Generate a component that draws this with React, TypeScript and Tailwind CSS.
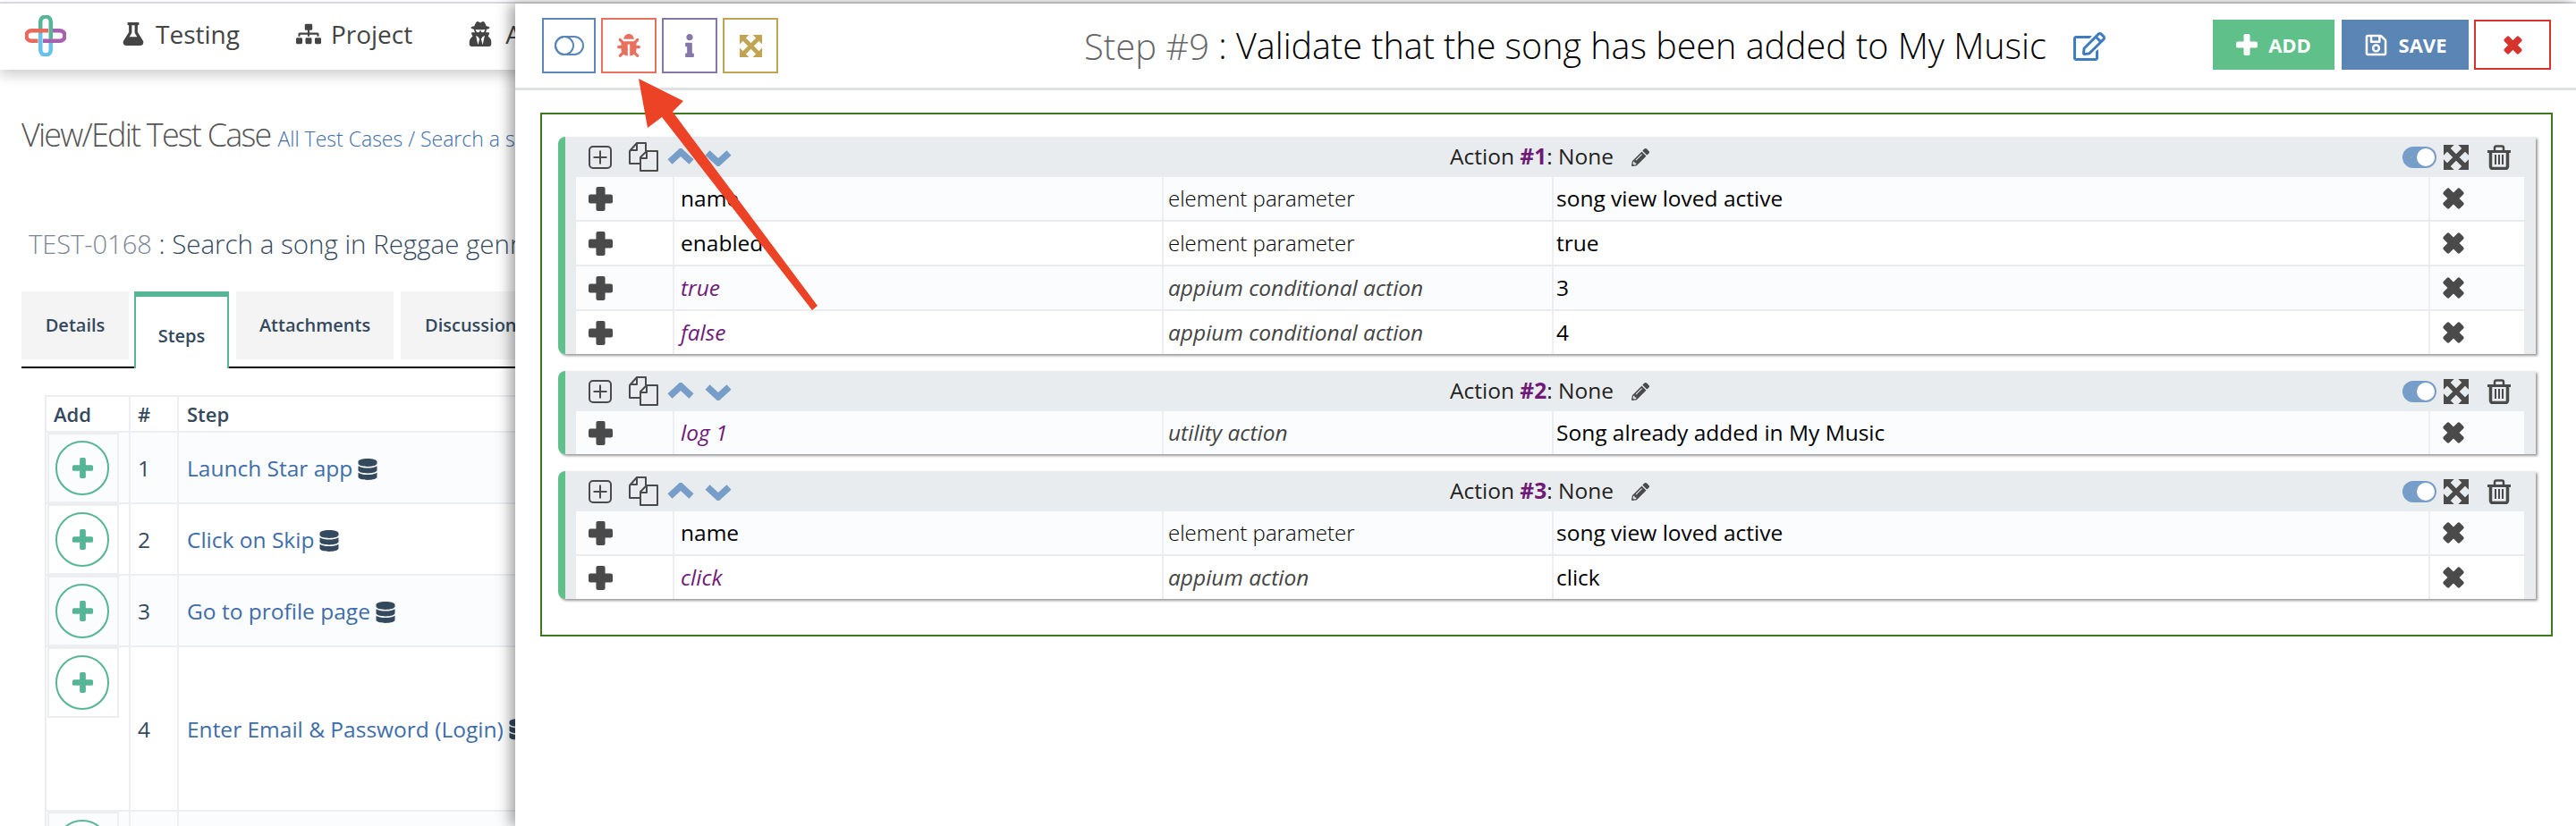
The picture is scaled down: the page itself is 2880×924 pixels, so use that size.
import React from "react";
import {
  FaBug,
  FaDatabase,
  FaFlask,
  FaInfo,
  FaPencilAlt,
  FaRegEdit,
  FaRegSave,
  FaSitemap,
  FaUserSecret,
} from "react-icons/fa";

interface ParamRow {
  name: string;
  kind: string;
  value: string;
  action?: boolean;
}

const cards: { id: number; rows: ParamRow[] }[] = [
  {
    id: 1,
    rows: [
      { name: "name", kind: "element parameter", value: "song view loved active" },
      { name: "enabled", kind: "element parameter", value: "true" },
      { name: "true", kind: "appium conditional action", value: "3", action: true },
      { name: "false", kind: "appium conditional action", value: "4", action: true },
    ],
  },
  {
    id: 2,
    rows: [{ name: "log 1", kind: "utility action", value: "Song already added in My Music", action: true }],
  },
  {
    id: 3,
    rows: [
      { name: "name", kind: "element parameter", value: "song view loved active" },
      { name: "click", kind: "appium action", value: "click", action: true },
    ],
  },
];

const steps = [
  { n: 1, label: "Launch Star app" },
  { n: 2, label: "Click on Skip" },
  { n: 3, label: "Go to profile page" },
];

const Logo = () => (
  <svg width="46" height="46" viewBox="0 0 46 46" fill="none" strokeWidth="4.5">
    <path d="M17.25 20V7.25a5.75 5.75 0 0 1 11.5 0V26" stroke="#55b596" />
    <path d="M17.25 20V38.75a5.75 5.75 0 0 0 11.5 0V26" stroke="#63c2ee" />
    <path d="M26 17.25H7.25a5.75 5.75 0 0 0 0 11.5H14.5" stroke="#e8695d" />
    <path d="M20 28.75H38.75a5.75 5.75 0 0 0 0-11.5H31" stroke="#a85fb0" />
  </svg>
);

// chunky plus / cross, the icon font's plus and times are heavier than the packaged ones
const Cross = ({ size, arm, color, turned }: { size: number; arm: number; color: string; turned?: boolean }) => (
  <svg width={size} height={size} viewBox="0 0 24 24" fill={color}>
    <g transform={turned ? "rotate(45 12 12)" : undefined}>
      <rect x="0" y={12 - arm / 2} width="24" height={arm} rx="1.8" />
      <rect x={12 - arm / 2} y="0" width={arm} height="24" rx="1.8" />
    </g>
  </svg>
);

const Chevron = ({ down }: { down?: boolean }) => (
  <svg width="30" height="20" viewBox="0 0 30 20" fill="none" stroke="#779dc9" strokeWidth="7.5">
    <path d={down ? "M3 5l12 11L27 5" : "M3 15L15 4l12 11"} />
  </svg>
);

const ExpandGlyph = ({ size, color }: { size: number; color: string }) => (
  <svg width={size} height={size} viewBox="0 0 24 24">
    <path d="M0 0h10L0 10zM24 0v10L14 0zM0 24V14l10 10zM24 24H14l10-10z" fill={color} />
    <path d="M4 4l16 16M20 4L4 20" stroke={color} strokeWidth="4.5" />
  </svg>
);

const TrashGlyph = () => (
  <svg width="26" height="28" viewBox="0 0 26 28" fill="none" stroke="#4a4a4a">
    <path d="M0 7.5h26" strokeWidth="3" />
    <path d="M8 7V3.5a2 2 0 0 1 2-2h6a2 2 0 0 1 2 2V7" strokeWidth="2.5" />
    <path d="M3.5 7v17.5a2.5 2.5 0 0 0 2.5 2h14a2.5 2.5 0 0 0 2.5-2V7" strokeWidth="3.5" />
    <path d="M9 11v11M13 11v11M17 11v11" strokeWidth="2" />
  </svg>
);

const ToggleGlyph = () => (
  <svg width="33" height="22" viewBox="0 0 33 22" fill="none" stroke="#5b87b8" strokeWidth="2">
    <rect x="1" y="1" width="31" height="20" rx="10" />
    <circle cx="11" cy="11" r="10" />
  </svg>
);

const PlusSquare = () => (
  <svg width="26" height="26" viewBox="0 0 26 26" fill="none" stroke="#4a4a4a" strokeWidth="2">
    <rect x="1" y="1" width="24" height="24" rx="4" />
    <path d="M13 5.5v15M5.5 13h15" />
  </svg>
);

const CopyGlyph = () => (
  <svg width="33" height="33" viewBox="0 0 33 33" fill="none" stroke="#4a4a4a" strokeWidth="2" strokeLinejoin="round">
    <path d="M12 24H1V10l8-9h10v9" />
    <path d="M9 1v8H1" />
    <path d="M13 32V17l7-7h12v22z" />
    <path d="M20 10v8h-7" />
  </svg>
);

const ActionCard = ({ id, rows }: { id: number; rows: ParamRow[] }) => (
  <div className="rounded-l-[8px] border-l-[8px] border-[#5fc08a] bg-[#e9ecee] pr-[13px] pl-[12px] shadow-[2px_2px_3px_rgba(0,0,0,0.4)]">
    <div className="flex h-[45px] items-center pl-[14px] pr-[15px]">
      <div className="flex flex-1 items-center">
        <PlusSquare />
        <span className="ml-[19px]">
          <CopyGlyph />
        </span>
        <span className="ml-[10px]">
          <Chevron />
        </span>
        <span className="ml-[12px]">
          <Chevron down />
        </span>
      </div>
      <div className="flex items-center text-[24.5px] text-[#222]">
        <span>
          Action <b className="text-[#6f1a78]">#{id}</b>: None
        </span>
        <FaPencilAlt className="ml-[20px] text-[20px] text-[#4a4a4a]" />
      </div>
      <div className="flex flex-1 items-center justify-end">
        <div className="flex h-[24px] w-[38px] justify-end rounded-full bg-[#779dc9] p-[2px]">
          <span className="h-[20px] w-[20px] rounded-full bg-white" />
        </div>
        <span className="ml-[8px]">
          <ExpandGlyph size={28} color="#4a4a4a" />
        </span>
        <span className="ml-[21px]">
          <TrashGlyph />
        </span>
      </div>
    </div>
    <div>
      {rows.map((row, i) => (
        <div
          key={row.name + i}
          className={`grid h-[48px] grid-cols-[110px_547px_436px_980px_105px] items-stretch text-[24.5px] ${
            i % 2 === 0 ? "bg-[#fbfcfe]" : "bg-white"
          } ${i > 0 ? "mt-[2px]" : ""}`}
        >
          <div className="flex items-center border-r-2 border-[#eceef2] pl-[14px]">
            <Cross size={27} arm={9} color="#4a4a4a" />
          </div>
          <div
            className={`flex items-center border-r-2 border-[#eceef2] pl-[7px] ${
              row.action ? "text-[#6f1a78] italic" : "text-black"
            }`}
          >
            {row.name}
          </div>
          <div
            className={`flex items-center border-r-2 border-[#eceef2] pl-[5px] ${
              row.action ? "text-[#444] italic" : "text-[24px] font-light text-black"
            }`}
          >
            {row.kind}
          </div>
          <div className="flex items-center border-r-2 border-[#eceef2] pl-[3px] text-black">{row.value}</div>
          <div className="flex items-center pl-[13px]">
            <Cross size={26} arm={8.5} color="#4a4a4a" turned />
          </div>
        </div>
      ))}
    </div>
  </div>
);

const AddCell = () => (
  <div className="h-[79px] w-[80px] border-2 border-[#eceef2] pt-[7px] pl-[7px]">
    <div className="flex h-[61px] w-[60px] items-center justify-center rounded-full border-2 border-[#55b596]">
      <Cross size={23} arm={7} color="#55b596" />
    </div>
  </div>
);

const StepRow = ({ n, label, tall, odd }: { n?: number; label?: string; tall?: boolean; odd?: boolean }) => (
  <div
    className={`grid grid-cols-[96px_54px_1fr] border-b-2 border-[#eceef2] ${tall ? "h-[184px]" : "h-[80px]"} ${
      odd ? "bg-[#fbfcfe]" : "bg-white"
    }`}
  >
    <div className="border-x-2 border-[#eceef2] pl-[1px]">
      <AddCell />
    </div>
    <div className="flex items-center border-r-2 border-[#eceef2] pt-[2px] pl-[8px] text-[24.5px] text-[#34495e]">{n}</div>
    {label && (
      <div className="flex items-center pt-[2px] pl-[9px] text-[24.5px] text-[#3e6daa]">
        {label}
        <FaDatabase className="ml-[5px] text-[24px] text-[#34495e]" />
      </div>
    )}
  </div>
);

export default function App() {
  return (
    <div className="relative h-[924px] w-[2880px] overflow-hidden bg-white pt-[2px] font-['Open_Sans',sans-serif]">
      <div className="h-[2px] bg-[#dfdee6]" />

      {/* Top nav */}
      <div className="flex h-[74px] items-center pb-[6px] pl-[28px] text-[28px] text-[#444] shadow-[0_6px_14px_rgba(0,0,0,0.2)]">
        <span className="mt-[4px]">
          <Logo />
        </span>
        <FaFlask className="ml-[62px] text-[26px]" />
        <span className="ml-[12px]">Testing</span>
        <FaSitemap className="ml-[63px] text-[28px]" />
        <span className="ml-[11px]">Project</span>
        <FaUserSecret className="ml-[62px] text-[28px]" />
        <span className="ml-[14px]">Admin</span>
      </div>

      {/* Page content under the panel */}
      <div className="pl-[24px]">
        <div className="mt-[46px] flex items-baseline">
          <span className="text-[36px] font-light tracking-[-1.8px] text-[#555]">View/Edit Test Case</span>
          <span className="ml-[8px] text-[23px] font-light text-[#3e6daa]">All Test Cases / Search a song in Reggae genre</span>
        </div>
        <div className="mt-[72px] pl-[8px] text-[29.5px] leading-[45px] font-light whitespace-nowrap text-[#34495e]">
          <span className="text-[29px] text-[#7a8794]">TEST-0168</span> : Search a song in Reggae genre
        </div>
        <div className="mt-[31px] flex h-[86px] w-[1200px] border-b-2 border-black text-[20px] font-semibold text-[#34495e]">
          <div className="flex h-[76px] w-[120px] items-center justify-center bg-[#f4f4f4]">Details</div>
          <div className="relative ml-[6px] flex h-[86px] w-[106px] items-center justify-center border-x-2 border-t-[6px] border-[#55b596] bg-white pt-[8px]">
            Steps
          </div>
          <div className="ml-[8px] flex h-[76px] w-[176px] items-center justify-center bg-[#f4f4f4]">Attachments</div>
          <div className="ml-[8px] flex h-[76px] w-[176px] items-center bg-[#f4f4f4] pl-[27px]">Discussion</div>
        </div>

        <div className="mt-[30px] ml-[26px] w-[1400px]">
          <div className="grid h-[42px] grid-cols-[96px_54px_1fr] border-y-2 border-[#eceef2] text-[22px] font-semibold text-[#34495e]">
            <div className="flex items-center border-x-2 border-[#eceef2] pl-[8px]">Add</div>
            <div className="flex items-center border-r-2 border-[#eceef2] pl-[8px]">#</div>
            <div className="flex items-center pl-[9px]">Step</div>
          </div>
          {steps.map((s) => (
            <StepRow key={s.n} n={s.n} label={s.label} odd={s.n % 2 === 1} />
          ))}
          <StepRow n={4} label="Enter Email & Password (Login)" tall />
          <StepRow odd />
        </div>
      </div>

      {/* Slide-over panel */}
      <div className="absolute top-[4px] right-0 bottom-0 left-[576px] bg-white shadow-[-6px_0_14px_rgba(0,0,0,0.35)]">
        <div className="flex h-[97px] items-start border-b-[3px] border-[#dfe0e3] pr-[28px] pl-[30px]">
          <div className="mt-[16px] flex gap-[6px]">
            <div className="flex h-[62px] w-[60px] items-center justify-center border-2 border-[#5b87b8]">
              <ToggleGlyph />
            </div>
            <div className="flex h-[62px] w-[62px] items-center justify-center border-2 border-[#e8705f] text-[26px] text-[#e8705f]">
              <FaBug />
            </div>
            <div className="flex h-[62px] w-[62px] items-center justify-center border-2 border-[#8676aa] text-[26px] text-[#8676aa]">
              <FaInfo />
            </div>
            <div className="flex h-[62px] w-[62px] items-center justify-center border-2 border-[#c2a352]">
              <ExpandGlyph size={25} color="#c2a352" />
            </div>
          </div>
          <div className="ml-[342px] flex h-[96px] items-center text-[39.5px] font-light whitespace-nowrap text-black">
            <span className="text-[40px] text-[#666]">Step #9</span>&nbsp;: Validate that the song has been added to My Music
            <FaRegEdit className="ml-[30px] text-[36px] text-[#3e7cc0]" />
          </div>
          <div className="mt-[18px] ml-auto flex text-[22px] font-bold text-white">
            <div className="flex h-[56px] w-[136px] items-center justify-center bg-[#5fc08a]">
              <span className="mr-[12px]">
                <Cross size={24} arm={7} color="#ffffff" />
              </span>
              ADD
            </div>
            <div className="ml-[8px] flex h-[56px] w-[142px] items-center justify-center bg-[#5b85b5]">
              <FaRegSave className="mr-[12px] text-[27px]" />
              SAVE
            </div>
            <div className="ml-[6px] flex h-[56px] w-[86px] items-center justify-center border-2 border-[#d6332c]">
              <Cross size={23} arm={8} color="#d6332c" turned />
            </div>
          </div>
        </div>
        <div className="mt-[25px] mr-[26px] ml-[28px] flex h-[586px] flex-col gap-[19px] border-2 border-[#3d7a1f] pt-[25px] pr-[17px] pl-[18px]">
          {cards.map((c) => (
            <ActionCard key={c.id} id={c.id} rows={c.rows} />
          ))}
        </div>
      </div>

      {/* Annotation arrow */}
      <svg className="absolute top-0 left-0" width="1000" height="400" viewBox="0 0 1000 400">
        <polygon points="714,88 764,113 752,125 914,342 908,347 740,131 724,143" fill="#ec4225" />
      </svg>
    </div>
  );
}
